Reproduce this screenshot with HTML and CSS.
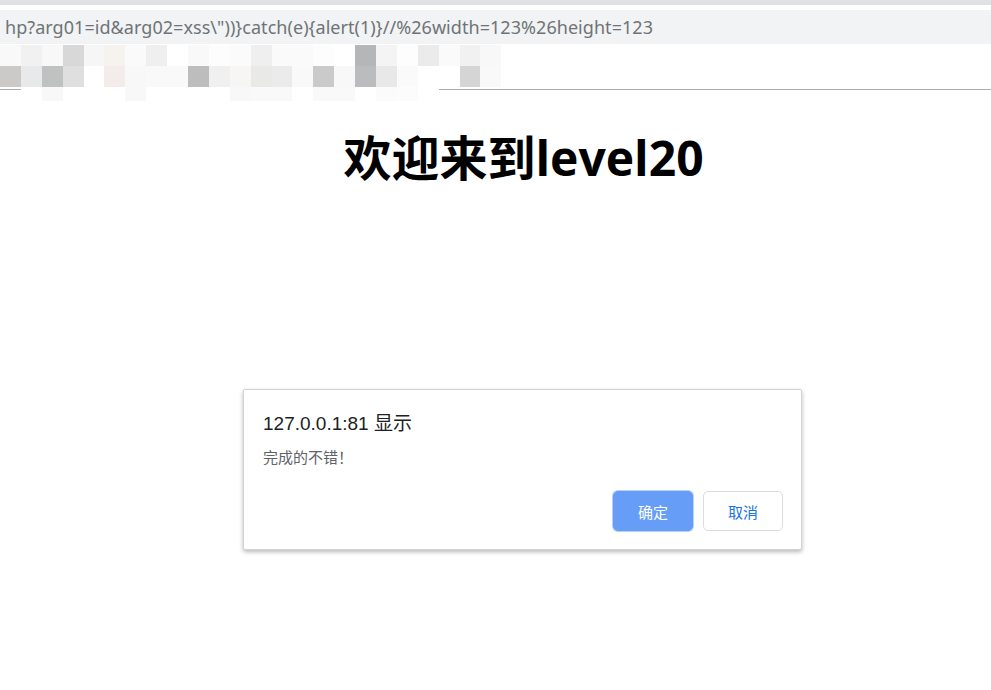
FILE: index.html
```html
<!DOCTYPE html>
<html lang="zh-CN">
<head>
<meta charset="utf-8">
<title>level20</title>
<link rel="stylesheet" href="styles.css">
</head>
<body>
<div class="chrome">
  <div class="tabstrip"></div>
  <div class="gap"></div>
  <div class="omnibox"><span class="url">hp?arg01=id&amp;arg02=xss\"))}catch(e){alert(1)}//%26width=123%26height=123</span></div>
  <div class="toolbar">
    <div class="mosaic">
      <i style="background:#f8f9f8"></i><i style="background:#f0f1f0"></i><i style="background:#f7f8f7"></i><i style="background:#d9d8d9"></i><i style="background:#f6f6f6"></i><i style="background:#f6f2ee"></i><i style="background:#fafafa"></i><i style="background:#efefef"></i><i style="background:#ffffff"></i><i style="background:#f8f9f8"></i><i style="background:#fdfdfd"></i><i style="background:#fbfbfb"></i><i style="background:#efefef"></i><i style="background:#fafafa"></i><i style="background:#fafafa"></i><i style="background:#fcfdfc"></i><i style="background:#ffffff"></i><i style="background:#b5b6b8"></i><i style="background:#f4f4f4"></i><i style="background:#fdfdfd"></i><i style="background:#ebebeb"></i><i style="background:#fafafa"></i><i style="background:#f1f1f1"></i><i style="background:#f8f8f8"></i>
      <i style="background:#cbcac9"></i><i style="background:#e8e9ea"></i><i style="background:#c0c2c1"></i><i style="background:#dfdfe0"></i><i style="background:#ffffff"></i><i style="background:#f4ecea"></i><i style="background:#f8f8f8"></i><i style="background:#f9f9f9"></i><i style="background:#f9f9f9"></i><i style="background:#bdbdbd"></i><i style="background:#f0f0f0"></i><i style="background:#f7f6f4"></i><i style="background:#e9e9e7"></i><i style="background:#ebebeb"></i><i style="background:#f9f9f9"></i><i style="background:#cacaca"></i><i style="background:#f8f8f8"></i><i style="background:#bbbcbe"></i><i style="background:#e8e8e8"></i><i style="background:#fafafa"></i><i style="background:#ffffff"></i><i style="background:#ffffff"></i><i style="background:#d5d5d5"></i><i style="background:#f9f9f9"></i>
      <i class="clear"></i><i style="background:#ffffff"></i><i style="background:#f8f8f8"></i><i style="background:#ffffff"></i><i style="background:#ffffff"></i><i style="background:#ffffff"></i><i style="background:#f8f8f8"></i><i style="background:#ffffff"></i><i style="background:#ffffff"></i><i style="background:#ffffff"></i><i style="background:#ffffff"></i><i style="background:#f8f8f8"></i><i style="background:#f9f9f9"></i><i style="background:#f9f9f9"></i><i style="background:#ffffff"></i><i style="background:#f9f9f9"></i><i style="background:#f9f9f9"></i><i style="background:#ffffff"></i><i style="background:#fbfbfb"></i><i style="background:#fcfcfc"></i><i style="background:#ffffff"></i><i class="clear"></i><i class="clear"></i><i class="clear"></i>
    </div>
  </div>
</div>
<div class="stage">
  <h1 class="title">欢迎来到level20</h1>
</div>
<div class="dialog">
  <div class="dlg-title">127.0.0.1:81 显示</div>
  <div class="dlg-msg">完成的不错！</div>
  <div class="dlg-actions">
    <button class="btn btn-ok">确定</button>
    <button class="btn btn-cancel">取消</button>
  </div>
</div>
</body>
</html>
```

FILE: styles.css
```css
html, body {
  margin: 0;
  padding: 0;
  background: #ffffff;
  overflow: hidden;
  width: 991px;
  height: 690px;
  font-family: "Noto Sans", "Noto Sans CJK SC", sans-serif;
}

.chrome {
  display: flex;
  flex-direction: column;
}

.tabstrip {
  height: 5px;
  background: #dfe1e5;
}

.gap {
  height: 5px;
  background: #ffffff;
}

.omnibox {
  height: 34px;
  background: #f1f3f4;
  display: flex;
  align-items: center;
  overflow: hidden;
  white-space: nowrap;
}

.url {
  margin-left: 5px;
  font-size: 18px;
  letter-spacing: 0.05px;
  color: #6f7377;
  font-family: "Noto Sans", "Noto Sans CJK SC", sans-serif;
}

.toolbar {
  position: relative;
  height: 45px;
  border-bottom: 1px solid #aeaeae;
}

.mosaic {
  position: absolute;
  left: 0;
  top: 1px;
  display: grid;
  grid-template-columns: repeat(24, 20.9px);
  grid-template-rows: 21px 21px 14px;
}

.mosaic i {
  display: block;
}

.mosaic i.clear {
  background: transparent;
}

.stage {
  width: 991px;
  box-sizing: border-box;
  padding-left: 56px;
}

.title {
  margin: 40px 0 0;
  text-align: center;
  font-size: 48px;
  line-height: 56px;
  font-weight: bold;
  color: #000000;
  font-family: "Open Sans", "Noto Sans CJK SC", sans-serif;
}

.dialog {
  position: absolute;
  left: 243px;
  top: 389px;
  width: 559px;
  height: 161px;
  box-sizing: border-box;
  background: #ffffff;
  border: 1px solid #d3d3d3;
  border-radius: 2px;
  box-shadow: 0 2px 4px rgba(0, 0, 0, 0.28);
  padding: 21px 18px 18px 19px;
  display: flex;
  flex-direction: column;
}

.dlg-title {
  font-size: 19px;
  line-height: 26px;
  color: #202124;
  font-family: "Liberation Sans", "Noto Sans CJK SC", sans-serif;
}

.dlg-msg {
  margin-top: 9px;
  font-size: 15px;
  line-height: 22px;
  color: #5f6368;
  font-family: "Noto Sans CJK SC", sans-serif;
}

.dlg-actions {
  margin-top: auto;
  display: flex;
  justify-content: flex-end;
  gap: 10px;
}

.btn {
  width: 80px;
  height: 40px;
  box-sizing: border-box;
  border-radius: 5px;
  font-size: 15px;
  font-family: "Noto Sans CJK SC", sans-serif;
  padding: 0;
  cursor: pointer;
}

.btn-ok {
  background: #669df6;
  border: 1px solid #669df6;
  color: #ffffff;
  box-shadow: 0 0 0 1px #b8d0fb;
}

.btn-cancel {
  background: #ffffff;
  border: 1px solid #dadce0;
  color: #1a73e8;
}
```
